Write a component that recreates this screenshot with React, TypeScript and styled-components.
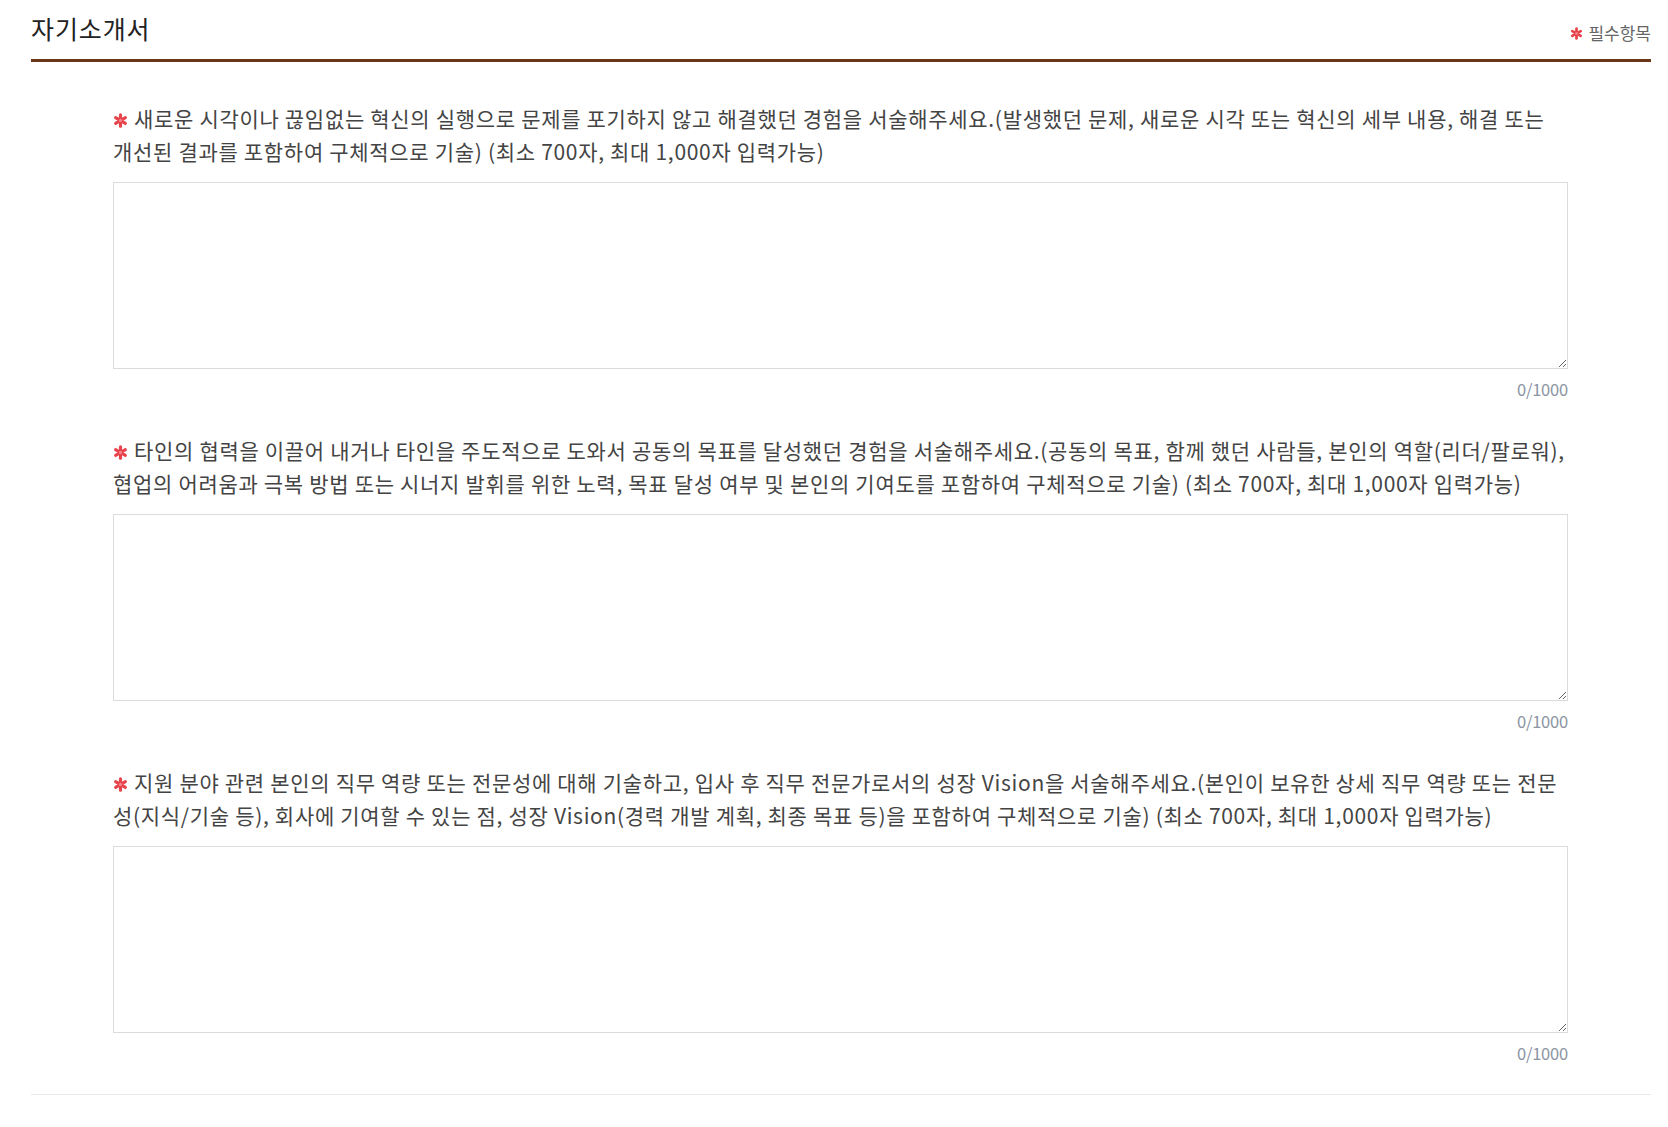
import React from "react";
import styled, { createGlobalStyle } from "styled-components";

const GlobalStyle = createGlobalStyle`
  html, body {
    margin: 0;
    padding: 0;
    background: #ffffff;
  }
  body {
    font-family: "Noto Sans CJK KR", "Noto Sans", sans-serif;
    color: #444444;
  }
  * { box-sizing: border-box; }
`;

const Page = styled.div`
  padding: 0 17px 0 31px;
  background: #ffffff;
`;

const Header = styled.div`
  display: flex;
  justify-content: space-between;
  align-items: center;
  padding: 10px 0 13px;
  border-bottom: 3px solid #6b3519;
`;

const Title = styled.h2`
  margin: 0;
  font-size: 25px;
  line-height: 36px;
  font-weight: 400;
  color: #222222;
  letter-spacing: 0.9px;
`;

const Required = styled.div`
  display: flex;
  align-items: center;
  gap: 5px;
  padding-top: 10px;
  font-size: 17px;
  line-height: 20px;
  color: #666666;
`;

const Body = styled.div`
  display: flex;
  flex-direction: column;
  gap: 35px;
  padding: 40px 83px 31px 82px;
  border-bottom: 1px solid #e8e8e8;
`;

const Item = styled.div`
  display: flex;
  flex-direction: column;
`;

const Question = styled.p`
  margin: 0;
  font-size: 21px;
  line-height: 33px;
  color: #444444;
  word-break: break-all;
  letter-spacing: 0.69px;
`;

const StarMark = styled.svg<{ $size: number }>`
  display: inline-block;
  width: ${(p) => p.$size}px;
  height: ${(p) => p.$size}px;
  vertical-align: ${(p) => (p.$size > 14 ? "-1px" : "0")};
  margin-right: ${(p) => (p.$size > 14 ? "6px" : "0")};
  flex: none;
`;

const Answer = styled.textarea`
  display: block;
  width: 100%;
  height: 187px;
  margin-top: 14px;
  padding: 10px 14px;
  border: 1px solid #dcdcdc;
  border-radius: 0;
  background: #ffffff;
  font-family: "Noto Sans CJK KR", "Noto Sans", sans-serif;
  font-size: 16px;
  color: #444444;
  outline: none;
`;

const Counter = styled.div`
  margin-top: 10px;
  text-align: right;
  font-size: 16.5px;
  line-height: 20px;
  color: #8a94a2;
  letter-spacing: -0.2px;
`;

const Star: React.FC<{ size: number }> = ({ size }) => (
  <StarMark $size={size} viewBox="0 0 20 20" aria-hidden="true">
    <g stroke="#e8424a" strokeWidth="4.2" strokeLinecap="round">
      <line x1="10" y1="2.5" x2="10" y2="17.5" />
      <line x1="3.5" y1="6.25" x2="16.5" y2="13.75" />
      <line x1="3.5" y1="13.75" x2="16.5" y2="6.25" />
    </g>
    <circle cx="10" cy="10" r="2.2" fill="#ffffff" opacity="0.35" />
  </StarMark>
);

const questions = [
  "새로운 시각이나 끊임없는 혁신의 실행으로 문제를 포기하지 않고 해결했던 경험을 서술해주세요.(발생했던 문제, 새로운 시각 또는 혁신의 세부 내용, 해결 또는 개선된 결과를 포함하여 구체적으로 기술) (최소 700자, 최대 1,000자 입력가능)",
  "타인의 협력을 이끌어 내거나 타인을 주도적으로 도와서 공동의 목표를 달성했던 경험을 서술해주세요.(공동의 목표, 함께 했던 사람들, 본인의 역할(리더/팔로워), 협업의 어려움과 극복 방법 또는 시너지 발휘를 위한 노력, 목표 달성 여부 및 본인의 기여도를 포함하여 구체적으로 기술) (최소 700자, 최대 1,000자 입력가능)",
  "지원 분야 관련 본인의 직무 역량 또는 전문성에 대해 기술하고, 입사 후 직무 전문가로서의 성장 Vision을 서술해주세요.(본인이 보유한 상세 직무 역량 또는 전문성(지식/기술 등), 회사에 기여할 수 있는 점, 성장 Vision(경력 개발 계획, 최종 목표 등)을 포함하여 구체적으로 기술) (최소 700자, 최대 1,000자 입력가능)",
];

export default function App() {
  return (
    <>
      <GlobalStyle />
      <Page>
        <Header>
          <Title>자기소개서</Title>
          <Required>
            <Star size={13} />
            필수항목
          </Required>
        </Header>
        <Body>
          {questions.map((q, i) => (
            <Item key={i}>
              <Question>
                <Star size={15} />
                {q}
              </Question>
              <Answer maxLength={1000} />
              <Counter>0/1000</Counter>
            </Item>
          ))}
        </Body>
      </Page>
    </>
  );
}
